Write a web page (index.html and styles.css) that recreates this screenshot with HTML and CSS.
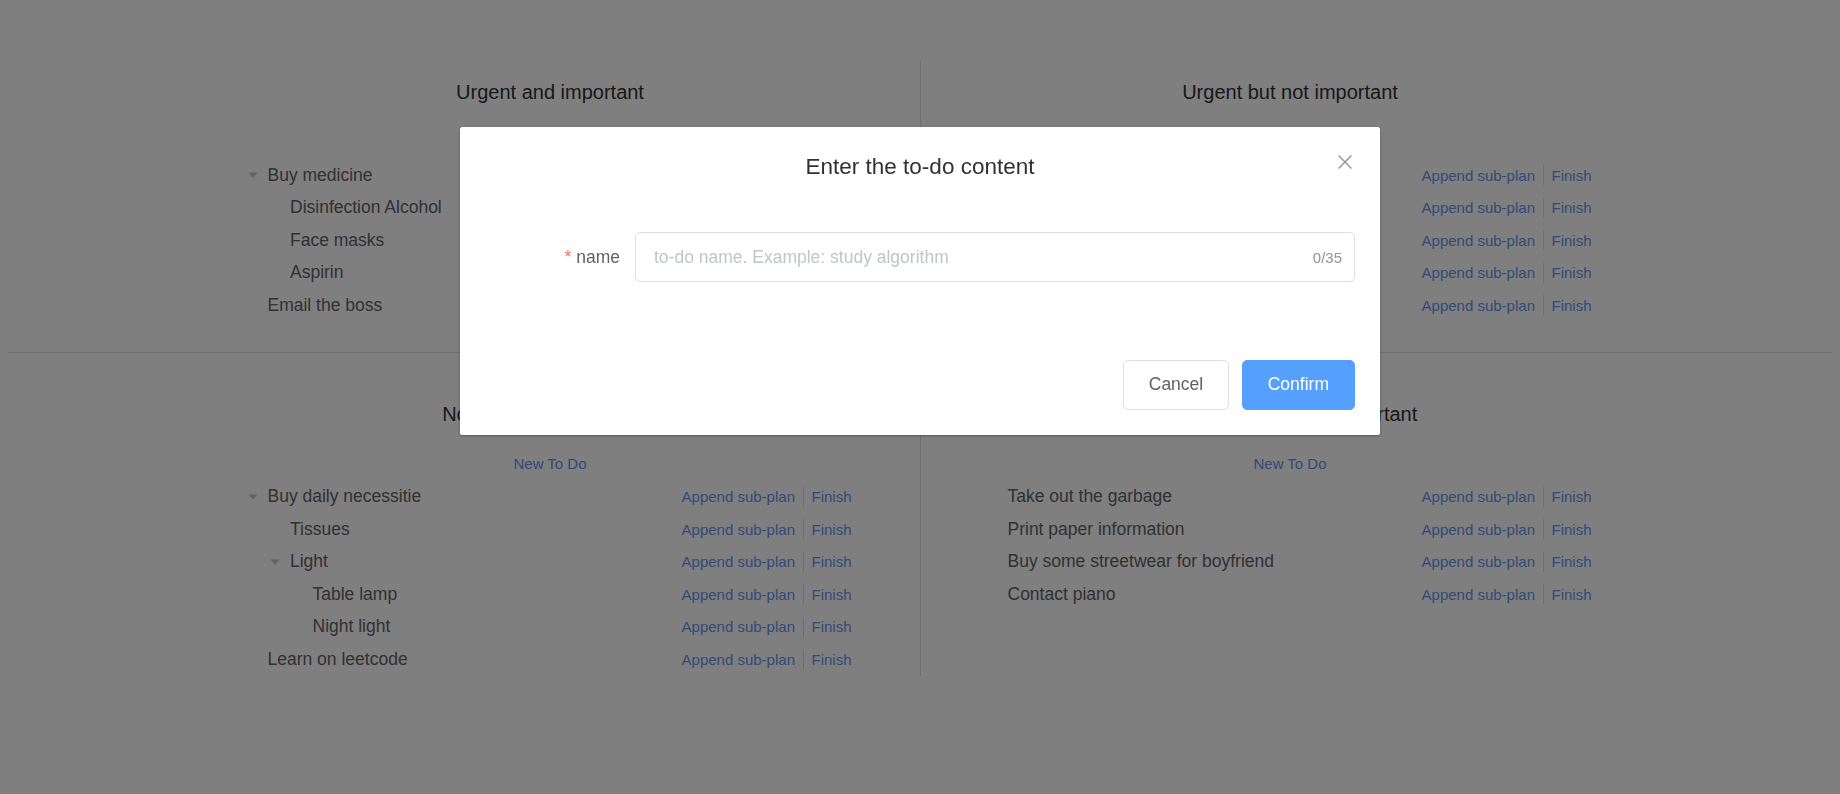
FILE: index.html
```html
<!DOCTYPE html>
<html lang="en">
<head>
<meta charset="utf-8">
<title>To-do quadrants</title>
<link rel="stylesheet" href="styles.css">
</head>
<body>
<div class="page">
  <div class="quad-row">
    <section class="quad quad-left">
      <div class="block">
        <h3 class="quad-title">Urgent and important</h3>
        <div class="new-todo"><a class="link">New To Do</a></div>
        <ul class="tree">
          <li class="node"><div class="label lvl1"><span class="caret"><svg width="10" height="6" viewBox="0 0 10 6"><polygon points="0.5,0.5 9.5,0.5 5,5.8" fill="#C0C4CC"/></svg></span><span>Buy medicine</span></div><div class="actions"><a class="link">Append sub-plan</a><span class="sep"></span><a class="link">Finish</a></div></li>
          <li class="node"><div class="label lvl2"><span class="caret"></span><span>Disinfection Alcohol</span></div><div class="actions"><a class="link">Append sub-plan</a><span class="sep"></span><a class="link">Finish</a></div></li>
          <li class="node"><div class="label lvl2"><span class="caret"></span><span>Face masks</span></div><div class="actions"><a class="link">Append sub-plan</a><span class="sep"></span><a class="link">Finish</a></div></li>
          <li class="node"><div class="label lvl2"><span class="caret"></span><span>Aspirin</span></div><div class="actions"><a class="link">Append sub-plan</a><span class="sep"></span><a class="link">Finish</a></div></li>
          <li class="node"><div class="label lvl1"><span class="caret"></span><span>Email the boss</span></div><div class="actions"><a class="link">Append sub-plan</a><span class="sep"></span><a class="link">Finish</a></div></li>
        </ul>
      </div>
    </section>
    <section class="quad quad-right">
      <div class="block">
        <h3 class="quad-title">Urgent but not important</h3>
        <div class="new-todo"><a class="link">New To Do</a></div>
        <ul class="tree">
          <li class="node"><div class="label lvl1"><span class="caret"></span><span>Reply to messages</span></div><div class="actions"><a class="link">Append sub-plan</a><span class="sep"></span><a class="link">Finish</a></div></li>
          <li class="node"><div class="label lvl1"><span class="caret"></span><span>Attend the meeting</span></div><div class="actions"><a class="link">Append sub-plan</a><span class="sep"></span><a class="link">Finish</a></div></li>
          <li class="node"><div class="label lvl1"><span class="caret"></span><span>Pick up the package</span></div><div class="actions"><a class="link">Append sub-plan</a><span class="sep"></span><a class="link">Finish</a></div></li>
          <li class="node"><div class="label lvl1"><span class="caret"></span><span>Book train tickets</span></div><div class="actions"><a class="link">Append sub-plan</a><span class="sep"></span><a class="link">Finish</a></div></li>
          <li class="node"><div class="label lvl1"><span class="caret"></span><span>Call the bank</span></div><div class="actions"><a class="link">Append sub-plan</a><span class="sep"></span><a class="link">Finish</a></div></li>
        </ul>
      </div>
    </section>
  </div>
  <div class="divider"></div>
  <div class="quad-row">
    <section class="quad quad-left">
      <div class="block">
        <h3 class="quad-title">Not urgent but important</h3>
        <div class="new-todo"><a class="link">New To Do</a></div>
        <ul class="tree">
          <li class="node"><div class="label lvl1"><span class="caret"><svg width="10" height="6" viewBox="0 0 10 6"><polygon points="0.5,0.5 9.5,0.5 5,5.8" fill="#C0C4CC"/></svg></span><span>Buy daily necessitie</span></div><div class="actions"><a class="link">Append sub-plan</a><span class="sep"></span><a class="link">Finish</a></div></li>
          <li class="node"><div class="label lvl2"><span class="caret"></span><span>Tissues</span></div><div class="actions"><a class="link">Append sub-plan</a><span class="sep"></span><a class="link">Finish</a></div></li>
          <li class="node"><div class="label lvl2"><span class="caret"><svg width="10" height="6" viewBox="0 0 10 6"><polygon points="0.5,0.5 9.5,0.5 5,5.8" fill="#C0C4CC"/></svg></span><span>Light</span></div><div class="actions"><a class="link">Append sub-plan</a><span class="sep"></span><a class="link">Finish</a></div></li>
          <li class="node"><div class="label lvl3"><span class="caret"></span><span>Table lamp</span></div><div class="actions"><a class="link">Append sub-plan</a><span class="sep"></span><a class="link">Finish</a></div></li>
          <li class="node"><div class="label lvl3"><span class="caret"></span><span>Night light</span></div><div class="actions"><a class="link">Append sub-plan</a><span class="sep"></span><a class="link">Finish</a></div></li>
          <li class="node"><div class="label lvl1"><span class="caret"></span><span>Learn on leetcode</span></div><div class="actions"><a class="link">Append sub-plan</a><span class="sep"></span><a class="link">Finish</a></div></li>
        </ul>
      </div>
    </section>
    <section class="quad quad-right">
      <div class="block">
        <h3 class="quad-title">Not urgent and not important</h3>
        <div class="new-todo"><a class="link">New To Do</a></div>
        <ul class="tree">
          <li class="node"><div class="label lvl1"><span class="caret"></span><span>Take out the garbage</span></div><div class="actions"><a class="link">Append sub-plan</a><span class="sep"></span><a class="link">Finish</a></div></li>
          <li class="node"><div class="label lvl1"><span class="caret"></span><span>Print paper information</span></div><div class="actions"><a class="link">Append sub-plan</a><span class="sep"></span><a class="link">Finish</a></div></li>
          <li class="node"><div class="label lvl1"><span class="caret"></span><span>Buy some streetwear for boyfriend</span></div><div class="actions"><a class="link">Append sub-plan</a><span class="sep"></span><a class="link">Finish</a></div></li>
          <li class="node"><div class="label lvl1"><span class="caret"></span><span>Contact piano</span></div><div class="actions"><a class="link">Append sub-plan</a><span class="sep"></span><a class="link">Finish</a></div></li>
        </ul>
      </div>
    </section>
  </div>
</div>

<div class="overlay">
  <div class="dialog">
    <div class="dialog-header">
      <span class="dialog-title">Enter the to-do content</span>
      <button class="close" aria-label="Close"><svg width="20" height="20" viewBox="0 0 20 20"><path d="M3.6 3.6 L16.4 16.4 M16.4 3.6 L3.6 16.4" stroke="#909399" stroke-width="1.4" fill="none"/></svg></button>
    </div>
    <div class="dialog-body">
      <div class="form-item">
        <label class="form-label"><span class="req">*</span>name</label>
        <div class="input-wrap">
          <input class="input" type="text" placeholder="to-do name. Example: study algorithm">
          <span class="count">0/35</span>
        </div>
      </div>
    </div>
    <div class="dialog-footer">
      <button class="btn">Cancel</button>
      <button class="btn btn-primary">Confirm</button>
    </div>
  </div>
</div>
</body>
</html>
```
FILE: styles.css
```css
html, body {
  margin: 0;
  padding: 0;
}
body {
  font-family: "Liberation Sans", Arial, Helvetica, sans-serif;
  background: #fff;
  color: #303133;
  width: 1840px;
  height: 794px;
  overflow: hidden;
}
.page {
  padding: 61px 8px 0;
}
.quad-row {
  display: grid;
  grid-template-columns: 1fr 1fr;
}
.quad {
  display: flex;
  min-width: 0;
}
.quad-left {
  justify-content: flex-end;
  padding-right: 57.5px;
}
.quad-right {
  justify-content: flex-start;
  border-left: 1px solid #DCDFE6;
  padding-left: 56.5px;
}
.block {
  width: 625px;
}
.quad-title {
  margin: 16px 0 0;
  font-size: 20px;
  line-height: 30px;
  font-weight: normal;
  text-align: center;
  color: #303133;
}
.new-todo {
  margin-top: 25.5px;
  text-align: center;
  line-height: 20px;
  font-size: 15px;
}
.link {
  color: #6495ED;
  text-decoration: none;
  cursor: pointer;
}
.tree {
  list-style: none;
  margin: 6.5px 0 0;
  padding: 0;
}
.node {
  display: flex;
  align-items: center;
  justify-content: space-between;
  height: 32.5px;
  padding-right: 11px;
}
.label {
  display: flex;
  align-items: center;
  font-size: 17.5px;
  color: #606266;
  white-space: nowrap;
}
.lvl2 { padding-left: 22.5px; }
.lvl3 { padding-left: 45px; }
.caret {
  width: 30px;
  height: 20px;
  display: flex;
  justify-content: center;
  align-items: center;
  flex-shrink: 0;
}
.caret svg { display: block; }
.actions {
  display: flex;
  align-items: center;
  font-size: 15px;
  white-space: nowrap;
}
.sep {
  width: 1px;
  height: 20px;
  background: #DCDFE6;
  margin: 0 7px 0 8.5px;
}
.divider {
  height: 1px;
  background: #DCDFE6;
  margin: 30px 0;
}

/* modal */
.overlay {
  position: fixed;
  inset: 0;
  background: rgba(0, 0, 0, 0.5);
}
.dialog {
  position: relative;
  width: 50%;
  margin: 127px auto 0;
  background: #fff;
  border-radius: 2.5px;
  box-shadow: 0 1px 3px rgba(0, 0, 0, 0.3);
}
.dialog-header {
  padding: 25px 25px 12.5px;
  text-align: center;
}
.dialog-title {
  font-size: 22.5px;
  line-height: 30px;
  color: #303133;
}
.close {
  position: absolute;
  top: 25px;
  right: 25px;
  width: 20px;
  height: 20px;
  padding: 0;
  border: 0;
  background: transparent;
  cursor: pointer;
}
.close svg { display: block; }
.dialog-body {
  padding: 37.5px 25px;
  font-size: 17.5px;
  color: #606266;
}
.form-item {
  display: flex;
  margin-bottom: 27.5px;
}
.form-label {
  width: 150px;
  flex-shrink: 0;
  box-sizing: border-box;
  padding-right: 15px;
  text-align: right;
  line-height: 50px;
  color: #606266;
}
.req {
  color: #F56C6C;
  margin-right: 5px;
}
.input-wrap {
  flex: 1;
  display: flex;
  align-items: center;
  height: 50px;
  box-sizing: border-box;
  border: 1px solid #DCDFE6;
  border-radius: 5px;
}
.input {
  flex: 1;
  min-width: 0;
  height: 100%;
  border: 0;
  outline: 0;
  background: transparent;
  font: inherit;
  font-size: 17.5px;
  color: #606266;
  padding: 0 0 0 18px;
}
.input::placeholder {
  color: #C0C4CC;
}
.count {
  font-size: 15px;
  color: #909399;
  padding-right: 12px;
}
.dialog-footer {
  padding: 12.5px 25px 25px;
  display: flex;
  justify-content: flex-end;
  gap: 12.5px;
}
.btn {
  height: 50px;
  padding: 0 25px;
  font-family: inherit;
  font-size: 17.5px;
  border-radius: 5px;
  border: 1px solid #DCDFE6;
  background: #fff;
  color: #606266;
  cursor: pointer;
}
.btn-primary {
  background: #55a0ff;
  border-color: #55a0ff;
  color: #fff;
}
```
